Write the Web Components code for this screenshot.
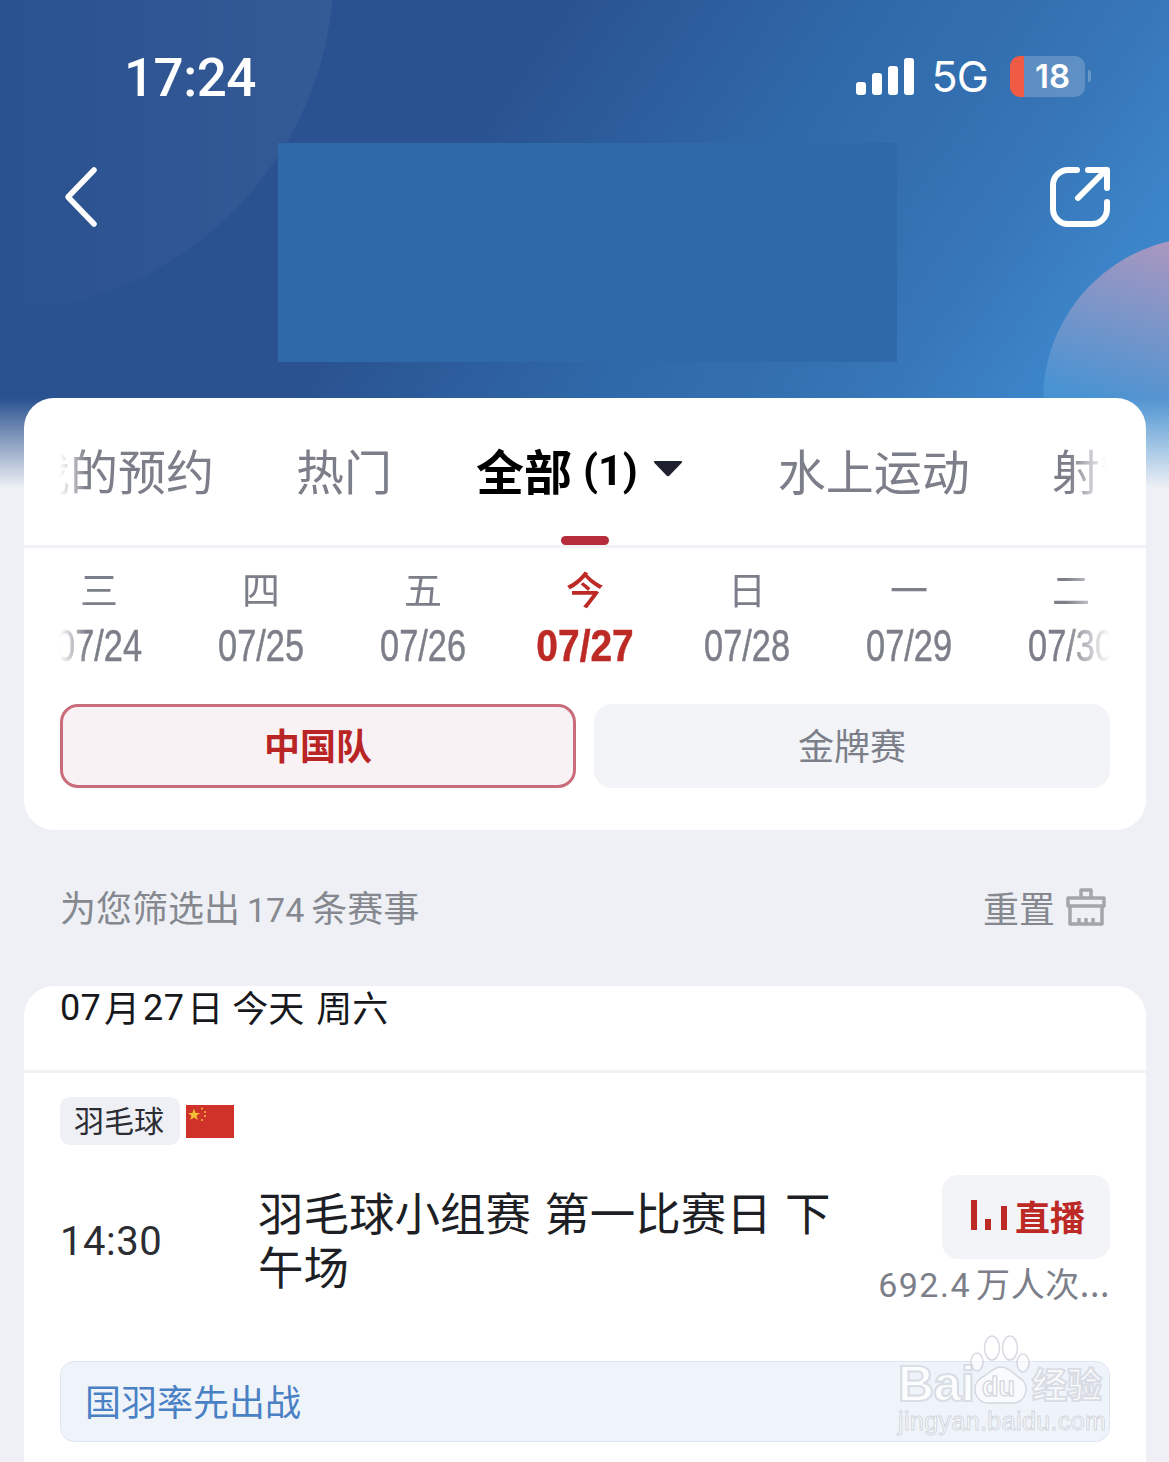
<!DOCTYPE html>
<html lang="zh">
<head>
<meta charset="utf-8">
<title>赛程</title>
<style>
  html, body { margin:0; padding:0; background:#eef0f5; }
  body { width:1169px; height:1462px; overflow:hidden; font-family:"Roboto","Noto Sans CJK SC",sans-serif; }
</style>
</head>
<body>
<app-page>
  <status-bar time="17:24" net="5G" level="18"></status-bar>
  <nav-bar></nav-bar>
  <panel-card class="filters">
    <tab-strip></tab-strip>
    <date-strip></date-strip>
    <chip-row></chip-row>
  </panel-card>
  <result-bar count="174"></result-bar>
  <event-list></event-list>
</app-page>
<script>
const CJK = '"Noto Sans CJK SC",sans-serif';

class Shadowed extends HTMLElement {
  constructor(html) {
    super();
    this.attachShadow({mode:'open'});
    this.shadowRoot.innerHTML = html;
  }
}

class AppPage extends Shadowed {
  constructor() {
    super(`
      <style>
        :host { display:block; position:relative; width:1169px; height:1462px; overflow:hidden; background:#eef0f5; }
        svg { position:absolute; left:0; top:0; z-index:0; }
        .flow { position:relative; z-index:1; display:flex; flex-direction:column; height:100%; }
      </style>
      <svg width="1169" height="490" viewBox="0 0 1169 490">
        <defs>
          <linearGradient id="base" x1="0" y1="0" x2="1100" y2="760" gradientUnits="userSpaceOnUse">
            <stop offset="0.35" stop-color="#2a5290"/><stop offset="0.53" stop-color="#2f68a8"/><stop offset="0.69" stop-color="#3674b5"/><stop offset="0.8" stop-color="#3c84c8"/><stop offset="0.92" stop-color="#408dd0"/>
          </linearGradient>
          <linearGradient id="glow" x1="0" y1="100" x2="330" y2="100" gradientUnits="userSpaceOnUse">
            <stop offset="0" stop-color="#fff" stop-opacity="0"/><stop offset="1" stop-color="#fff" stop-opacity=".05"/>
          </linearGradient>
          <linearGradient id="lilac" x1="1150" y1="240" x2="1100" y2="400" gradientUnits="userSpaceOnUse">
            <stop offset="0" stop-color="#a897c0"/><stop offset="1" stop-color="#4a93d2"/>
          </linearGradient>
          <linearGradient id="fade" x1="0" y1="398" x2="0" y2="488" gradientUnits="userSpaceOnUse">
            <stop offset="0" stop-color="#eef0f5" stop-opacity="0"/><stop offset="1" stop-color="#eef0f5"/>
          </linearGradient>
        </defs>
        <rect width="1169" height="490" fill="url(#base)"/>
        <circle cx="-10" cy="-32" r="344" fill="url(#glow)"/>
        <circle cx="1206" cy="400" r="163" fill="url(#lilac)"/>
        <rect y="398" width="1169" height="92" fill="url(#fade)"/>
      </svg>
      <div class="flow"><slot></slot></div>
    `);
  }
}

class StatusBar extends Shadowed {
  constructor() {
    super(`
      <style>
        :host { display:flex; align-items:center; height:143px; box-sizing:border-box; padding:9px 78px 0 124px; color:#fff; }
        .time { font:500 53px/1 "Roboto",sans-serif; letter-spacing:-.5px; flex:1; margin-top:4px; }
        svg { display:block; margin-right:17px; }
        .net { font:400 43px/1 "Inter",sans-serif; margin-right:22px; letter-spacing:-.8px; }
        .batt { display:flex; align-items:center; justify-content:center; width:75px; height:41px; box-sizing:border-box; padding-left:10px; border-radius:10px; overflow:hidden;
                background:linear-gradient(to right,#ef5a45 14px,rgba(255,255,255,.2) 14px); font:600 33px/1 "Inter",sans-serif; }
        .nub { width:3px; height:12px; margin-left:3px; border-radius:0 4px 4px 0; background:rgba(255,255,255,.25); }
      </style>
      <span class="time"></span>
      <svg width="58" height="37" viewBox="0 0 58 37" fill="#fff">
        <rect x="0" y="24" width="10" height="13" rx="3"/><rect x="16" y="15" width="10" height="22" rx="3"/>
        <rect x="32" y="8" width="10" height="29" rx="3"/><rect x="48" y="0" width="10" height="37" rx="3"/>
      </svg>
      <span class="net"></span>
      <span class="batt"></span><span class="nub"></span>
    `);
  }
  connectedCallback() {
    this.shadowRoot.querySelector('.time').textContent = this.getAttribute('time');
    this.shadowRoot.querySelector('.net').textContent = this.getAttribute('net');
    this.shadowRoot.querySelector('.batt').textContent = this.getAttribute('level');
  }
}

class NavBar extends Shadowed {
  constructor() {
    super(`
      <style>
        :host { display:flex; height:255px; box-sizing:border-box; padding:0 56px 0 64px; }
        .back { margin:22px 178px 0 0; }
        .title { width:619px; height:219px; background:#2f69a9; }
        .share { margin:22px 0 0 auto; }
      </style>
      <svg class="back" width="36" height="66" viewBox="0 0 36 66" fill="none" stroke="#fff" stroke-width="5.500" stroke-linecap="round" stroke-linejoin="round">
        <path d="M30 5 L4 32 L30 59"/>
      </svg>
      <div class="title"></div>
      <svg class="share" width="66" height="66" viewBox="0 0 66 66" fill="none" stroke="#fff" stroke-width="6" stroke-linecap="round" stroke-linejoin="round">
        <path d="M30 5 H21 A15 15 0 0 0 6 20 V44 A15 15 0 0 0 21 59 H45 A15 15 0 0 0 60 44 V37"/>
        <path d="M31 33 L59 5"/><path d="M41 5 H60 V23"/>
      </svg>
    `);
  }
}

class PanelCard extends Shadowed {
  constructor() {
    super(`
      <style>
        :host { display:block; margin:0 23px 0 24px; height:432px; background:#fff; border-radius:30px; overflow:hidden; }
      </style>
      <slot></slot>
    `);
  }
}

class SportTab extends Shadowed {
  constructor() {
    super(`
      <style>
        :host { flex:none; display:flex; align-items:center; font:400 48px/1 ${CJK}; color:#7c7f89; }
        :host([active]) { color:#000; font-weight:700; }
      </style>
      <slot></slot>
    `);
  }
}

class TabStrip extends Shadowed {
  constructor() {
    super(`
      <style>
        :host { display:block; position:relative; height:150px; box-sizing:border-box; border-bottom:3px solid #f1f2f5; }
        .clip { margin:0 36px; height:147px; overflow:hidden;
                -webkit-mask-image:linear-gradient(to right,transparent,#000 26px,#000 calc(100% - 40px),transparent calc(100% - 4px));
                mask-image:linear-gradient(to right,transparent,#000 26px,#000 calc(100% - 40px),transparent calc(100% - 4px)); }
        .row { display:flex; align-items:center; height:141px; margin-left:-38px; white-space:nowrap; }
        sport-tab { margin-right:82px; }
        sport-tab:nth-child(2) { margin-right:83px; }
        sport-tab[active] { margin-right:95px; margin-left:1px; }
        .num { font:700 43px/1 "Roboto",sans-serif; margin:3px 0 0 11px; }
        svg { margin:0 0 0 15px; }
        .bar { position:absolute; left:537px; bottom:0; width:48px; height:9px; border-radius:5px; background:#b72c3a; }
      </style>
      <div class="clip"><div class="row">
        <sport-tab>我的预约</sport-tab>
        <sport-tab>热门</sport-tab>
        <sport-tab active>全部<span class="num">(1)</span>
          <svg width="30" height="17" viewBox="0 0 30 17"><path d="M2 1 H28 Q30 1 28.500 3 L16.500 15.500 Q15 17 13.500 15.500 L1.500 3 Q0 1 2 1Z" fill="#1f2030"/></svg>
        </sport-tab>
        <sport-tab>水上运动</sport-tab>
        <sport-tab>射箭</sport-tab>
      </div></div>
      <div class="bar"></div>
    `);
  }
}

class DateItem extends Shadowed {
  constructor() {
    super(`
      <style>
        :host { flex:none; width:162px; display:flex; flex-direction:column; align-items:center; color:#7c7f89; }
        :host([today]) { color:#bd2a26; }
        .wd { font:400 38px/44px ${CJK}; height:44px; margin-top:18px; }
        .dt { display:inline-block; font:400 44px/50px "Liberation Sans",sans-serif; margin-top:11px; transform:scaleX(.78); -webkit-text-stroke:.5px currentColor; }
        :host([today]) .wd { font-weight:500; }
        :host([today]) .dt { font-weight:700; transform:scaleX(.885); }
      </style>
      <span class="wd"></span><span class="dt"></span>
    `);
  }
  connectedCallback() {
    this.shadowRoot.querySelector('.wd').textContent = this.getAttribute('wd');
    this.shadowRoot.querySelector('.dt').textContent = this.getAttribute('dt');
  }
}

class DateStrip extends Shadowed {
  constructor() {
    super(`
      <style>
        :host { display:block; height:156px; margin:0 36px;  overflow:hidden;
                -webkit-mask-image:linear-gradient(to right,transparent,#000 26px,#000 calc(100% - 44px),transparent);
                mask-image:linear-gradient(to right,transparent,#000 26px,#000 calc(100% - 44px),transparent); }
        .row { display:flex; margin-left:-42px; }
      </style>
      <div class="row">
        <date-item wd="三" dt="07/24"></date-item>
        <date-item wd="四" dt="07/25"></date-item>
        <date-item wd="五" dt="07/26"></date-item>
        <date-item wd="今" dt="07/27" today></date-item>
        <date-item wd="日" dt="07/28"></date-item>
        <date-item wd="一" dt="07/29"></date-item>
        <date-item wd="二" dt="07/30"></date-item>
      </div>
    `);
  }
}

class ChipRow extends Shadowed {
  constructor() {
    super(`
      <style>
        :host { display:grid; grid-template-columns:1fr 1fr; gap:18px; margin:0 36px; }
        div { height:84px; box-sizing:border-box; display:flex; align-items:center; justify-content:center; border-radius:18px; padding-bottom:4px;
              font:400 36px/1 ${CJK}; color:#7c7f89; background:#f3f4f8; }
        .on { color:#b92525; font-weight:700; background:#f9f2f5; border:3px solid #c96c7b; padding-bottom:4px; }
      </style>
      <div class="on">中国队</div>
      <div>金牌赛</div>
    `);
  }
}

class ResultBar extends Shadowed {
  constructor() {
    super(`
      <style>
        :host { display:flex; align-items:center; justify-content:space-between; height:156px; box-sizing:border-box; padding:0 63px 2px 60px; font:400 36px/1 ${CJK}; color:#85888f; }
        .num { font:400 34px/1 "Roboto",sans-serif; margin:0 7px; }
        .reset { display:flex; align-items:center; gap:11px; }
      </style>
      <span>为您筛选出<span class="num"></span>条赛事</span>
      <span class="reset">重置
        <svg width="40" height="38" viewBox="0 0 40 38" fill="none" stroke="#a2a5ab" stroke-width="3.500" stroke-linejoin="round">
          <path d="M15 10 V2 H25 V10"/><path d="M2 10 H38 V18 H2Z"/><path d="M4 18 V36 H36 V18"/>
          <path d="M13 36 V30 M20 36 V30 M27 36 V30"/>
        </svg>
      </span>
    `);
  }
  connectedCallback() {
    this.shadowRoot.querySelector('.num').textContent = this.getAttribute('count');
  }
}

class EventList extends Shadowed {
  constructor() {
    super(`
      <style>
        :host { display:block; position:relative; flex:1; margin:0 23px 0 24px; background:#fff; border-radius:30px 30px 0 0; color:#24262d; }
        .head { height:87px; box-sizing:border-box; padding:2px 36px 0; display:flex; border-bottom:3px solid #f1f2f5; font:400 36px/36px ${CJK}; color:#17181c; }
        .head .n { font-family:"Roboto",sans-serif; letter-spacing:.3px; margin-top:2px; }
        .head .g { margin-left:12px; }
        .head .t { margin:0 3px; }
        .head .t + .g { margin-left:6px; }
        .tags { display:flex; align-items:center; gap:6px; padding:24px 36px 0; }
        .sport { height:48px; width:120px; padding:0 2px 4px 0; box-sizing:border-box; display:flex; align-items:center; justify-content:center; background:#eef0f5; border-radius:10px; font:400 30px/1 ${CJK}; color:#2b2d33; }
        .row { display:grid; grid-template-columns:198px 589px 1fr; padding:30px 36px 0; }
        .time { font:400 40px/1 "Roboto",sans-serif; letter-spacing:.5px; align-self:center; margin-top:6px; color:#2b2d33; }
        .name { font:400 45.500px/54px ${CJK}; word-spacing:3px; color:#1d1f25; padding-top:9px; }
        .right { display:flex; flex-direction:column; align-items:flex-end; margin-left:-50px; }
        .live { width:168px; height:84px; box-sizing:border-box; padding:0 0 4px 29px; display:flex; align-items:center; gap:8px; background:#f3f4f8; border-radius:16px; font:700 35px/1 ${CJK}; color:#bd2a26; }
        .views { font:400 34px/1 ${CJK}; color:#7c7f89; margin-top:7px; white-space:nowrap; letter-spacing:.6px; }
        .views .n { font-family:"Roboto",sans-serif; letter-spacing:1.500px; margin-right:5px; }
        .note { margin:58px 36px 0; height:81px; box-sizing:border-box; padding:0 0 3px 24px; display:flex; align-items:center; background:#eff4fb; border:1px solid #dfe6f2; border-radius:14px; font:400 36px/1 ${CJK}; color:#4a80c4; }
      </style>
      <div class="head"><span class="n">07</span><span class="t">月</span><span class="n">27</span><span class="t">日</span><span class="g">今天</span><span class="g">周六</span></div>
      <div class="tags">
        <span class="sport">羽毛球</span>
        <svg width="48" height="33" viewBox="0 0 48 33">
          <rect width="48" height="33" fill="#ce3229"/>
          <path d="M8 3.500 L9.600 8 L14 8 L10.500 10.800 L11.800 15 L8 12.500 L4.200 15 L5.500 10.800 L2 8 L6.400 8Z" fill="#f4c038"/>
          <circle cx="16" cy="3.500" r="1" fill="#f4c038"/><circle cx="19" cy="7" r="1" fill="#f4c038"/>
          <circle cx="19" cy="11" r="1" fill="#f4c038"/><circle cx="16" cy="15" r="1" fill="#f4c038"/>
        </svg>
      </div>
      <div class="row">
        <span class="time">14:30</span>
        <span class="name">羽毛球小组赛 第一比赛日 下午场</span>
        <div class="right">
          <span class="live">
            <svg width="36" height="30" viewBox="0 0 36 30" fill="#bd2a26"><rect x="0" y="0" width="6" height="30"/><rect x="14" y="19" width="6" height="11"/><rect x="30" y="6" width="6" height="24"/></svg>
            直播
          </span>
          <span class="views"><span class="n">692.4</span>万人次...</span>
        </div>
      </div>
      <div class="note" style="margin-top:59px">国羽率先出战</div>
      <baidu-mark></baidu-mark>
    `);
  }
}

class BaiduMark extends Shadowed {
  constructor() {
    super(`
      <style>
        :host { position:absolute; left:872px; top:348px; width:212px; height:104px; color:rgba(255,255,255,.8); -webkit-text-stroke:2.200px rgba(190,195,205,.5); }
        span, div { position:absolute; }
        .en { left:2px; top:25px; font:700 50px/50px "Liberation Sans",sans-serif; letter-spacing:-.5px; }
        .du { left:86px; top:33px; font:700 27px/40px "Liberation Sans",sans-serif; -webkit-text-stroke:1.500px rgba(190,195,205,.6); }
        .cn { left:136px; top:27px; font:700 35px/44px ${CJK}; }
        .url { left:2px; top:73px; font:400 25px/28px "Liberation Sans",sans-serif; white-space:nowrap; letter-spacing:.4px; -webkit-text-stroke:1px rgba(185,190,200,.6); }
        svg { position:absolute; left:70px; top:0; }
      </style>
      <svg width="72" height="72" viewBox="0 0 72 72" fill="rgba(255,255,255,.55)" stroke="rgba(190,195,205,.6)" stroke-width="1.500">
        <ellipse cx="26" cy="14" rx="7.500" ry="12"/><ellipse cx="44" cy="14" rx="7.500" ry="12"/>
        <ellipse cx="11" cy="28" rx="6" ry="9"/><ellipse cx="57" cy="29" rx="6" ry="9"/>
        <path d="M35 33 C43 33 47 40 54 44 C65 51 60 69 47 69 C40 69 30 69 22 69 C9 69 4 51 15 44 C23 40 27 33 35 33Z"/>
      </svg>
      <span class="en">Bai</span><span class="du">du</span><span class="cn">经验</span>
      <div class="url">jingyan.baidu.com</div>
    `);
  }
}

customElements.define('app-page', AppPage);
customElements.define('status-bar', StatusBar);
customElements.define('nav-bar', NavBar);
customElements.define('panel-card', PanelCard);
customElements.define('sport-tab', SportTab);
customElements.define('tab-strip', TabStrip);
customElements.define('date-item', DateItem);
customElements.define('date-strip', DateStrip);
customElements.define('chip-row', ChipRow);
customElements.define('result-bar', ResultBar);
customElements.define('event-list', EventList);
customElements.define('baidu-mark', BaiduMark);
</script>
</body>
</html>
